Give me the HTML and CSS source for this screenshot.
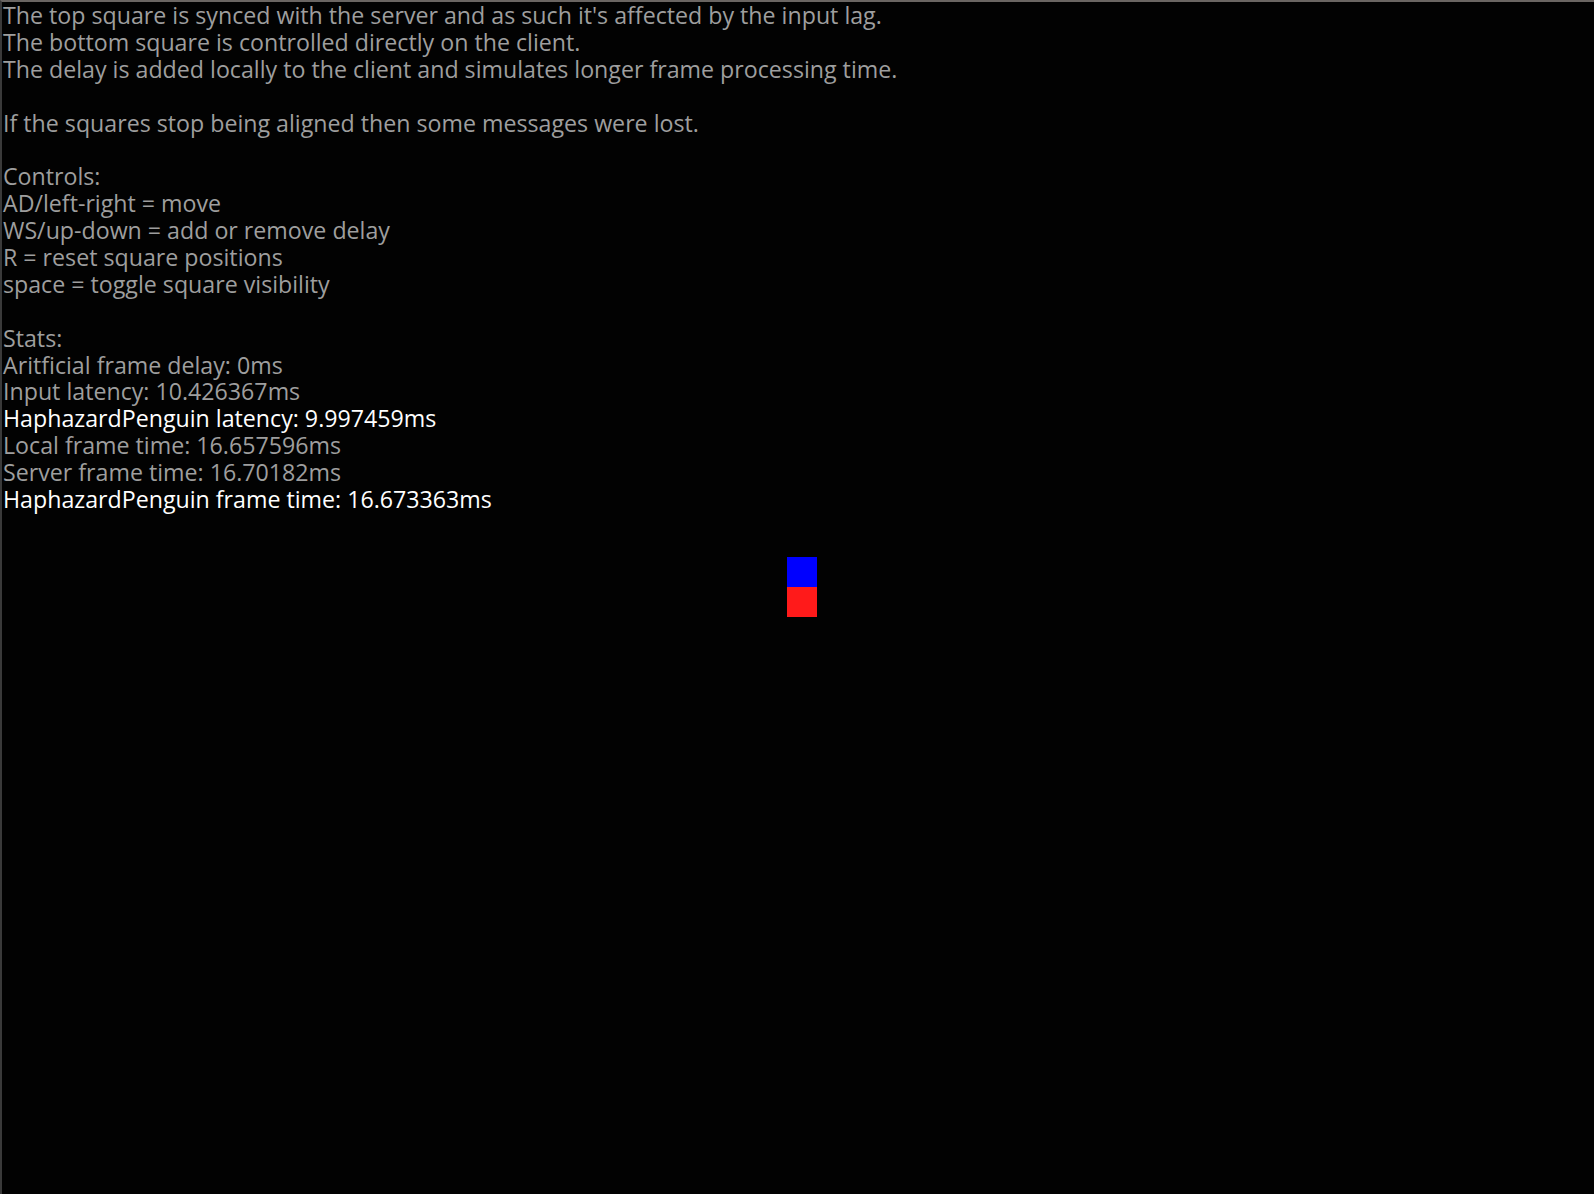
FILE: index.html
```html
<!DOCTYPE html>
<html>
<head>
<meta charset="utf-8">
<link rel="stylesheet" href="styles.css">
</head>
<body>
<div class="frame">
  <div class="text">
    <div class="line">The top square is synced with the server and as such it's affected by the input lag.</div>
    <div class="line">The bottom square is controlled directly on the client.</div>
    <div class="line">The delay is added locally to the client and simulates longer frame processing time.</div>
    <div class="line blank"></div>
    <div class="line">If the squares stop being aligned then some messages were lost.</div>
    <div class="line blank"></div>
    <div class="line">Controls:</div>
    <div class="line">AD/left-right = move</div>
    <div class="line">WS/up-down = add or remove delay</div>
    <div class="line">R = reset square positions</div>
    <div class="line">space = toggle square visibility</div>
    <div class="line blank"></div>
    <div class="line">Stats:</div>
    <div class="line">Aritficial frame delay: 0ms</div>
    <div class="line">Input latency: 10.426367ms</div>
    <div class="line hl">HaphazardPenguin latency: 9.997459ms</div>
    <div class="line">Local frame time: 16.657596ms</div>
    <div class="line">Server frame time: 16.70182ms</div>
    <div class="line hl">HaphazardPenguin frame time: 16.673363ms</div>
  </div>
  <div class="sq blue"></div>
  <div class="sq red"></div>
</div>
</body>
</html>
```
FILE: styles.css
```css
html, body {
  margin: 0;
  padding: 0;
  background: #000;
}
.frame {
  position: relative;
  width: 1594px;
  height: 1194px;
  box-sizing: border-box;
  border-top: 2px solid #6a6562;
  border-left: 2px solid #3a3a3a;
  background: #020202;
  overflow: hidden;
}
.text {
  padding-left: 1px;
  font-family: "Open Sans", sans-serif;
  font-size: 23.2px;
  color: #9e9e9e;
}
.line {
  height: 26.9px;
  line-height: 26.9px;
  white-space: pre;
}
.hl {
  color: #ffffff;
}
.sq {
  position: absolute;
  left: 785px;
  width: 30px;
  height: 30px;
}
.blue {
  top: 555px;
  background: #0000ff;
}
.red {
  top: 585px;
  background: #ff1a1a;
}
```
